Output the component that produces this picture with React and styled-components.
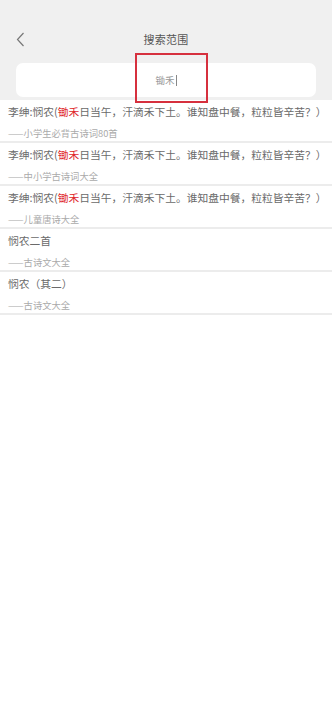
import React from 'react'
import styled, { createGlobalStyle } from 'styled-components'

const Global = createGlobalStyle`
  body {
    margin: 0;
    background: #fff;
    font-family: "Noto Sans CJK SC", "Noto Sans", sans-serif;
  }
`

const Page = styled.div`
  position: relative;
  width: 332px;
  min-height: 720px;
  background: #fff;
`

const Header = styled.div`
  background: #f0f0f0;
  padding: 24px 16px 3px;
`

const NavBar = styled.div`
  position: relative;
  height: 30px;
  display: flex;
  align-items: center;
  justify-content: center;
`

const Back = styled.svg`
  position: absolute;
  left: 0;
  top: 8px;
  width: 9px;
  height: 15px;
`

const Title = styled.div`
  font-size: 11px;
  color: #555;
  letter-spacing: 0.2px;
`

const SearchBox = styled.div`
  margin-top: 9px;
  height: 34px;
  background: #fff;
  border-radius: 7px;
  display: flex;
  align-items: center;
  justify-content: center;
  font-size: 9.5px;
  color: #999;
`

const Caret = styled.span`
  display: inline-block;
  width: 1px;
  height: 11px;
  margin-left: 1px;
  background: #888;
`

const Highlight = styled.div`
  position: absolute;
  left: 135px;
  top: 53px;
  width: 69px;
  height: 46px;
  border: 2px solid #d6303e;
`

const List = styled.div``

const Row = styled.div`
  padding: 5px 8px 2px;
  border-bottom: 2px solid #ececec;
`

const Main = styled.div`
  font-size: 10.75px;
  line-height: 13px;
  color: #6a6a6a;
  white-space: nowrap;
`

const Red = styled.span`
  color: #e0262c;
`

const Source = styled.div`
  margin-top: 9px;
  font-size: 9.3px;
  line-height: 12px;
  color: #aaa;
`

const poem = (
  <>
    李绅:悯农(<Red>锄禾</Red>日当午，汗滴禾下土。谁知盘中餐，粒粒皆辛苦？）
  </>
)

const rows = [
  { title: poem, source: '小学生必背古诗词80首' },
  { title: poem, source: '中小学古诗词大全' },
  { title: poem, source: '儿童唐诗大全' },
  { title: '悯农二首', source: '古诗文大全' },
  { title: '悯农（其二）', source: '古诗文大全' },
]

export default function App() {
  return (
    <Page>
      <Global />
      <Header>
        <NavBar>
          <Back viewBox="0 0 9 15">
            <path d="M7.5 1 L1.5 7.5 L7.5 14" fill="none" stroke="#777" strokeWidth="1.2" />
          </Back>
          <Title>搜索范围</Title>
        </NavBar>
        <SearchBox>
          锄禾<Caret />
        </SearchBox>
      </Header>
      <List>
        {rows.map((r, i) => (
          <Row key={i}>
            <Main>{r.title}</Main>
            <Source>——{r.source}</Source>
          </Row>
        ))}
      </List>
      <Highlight />
    </Page>
  )
}
